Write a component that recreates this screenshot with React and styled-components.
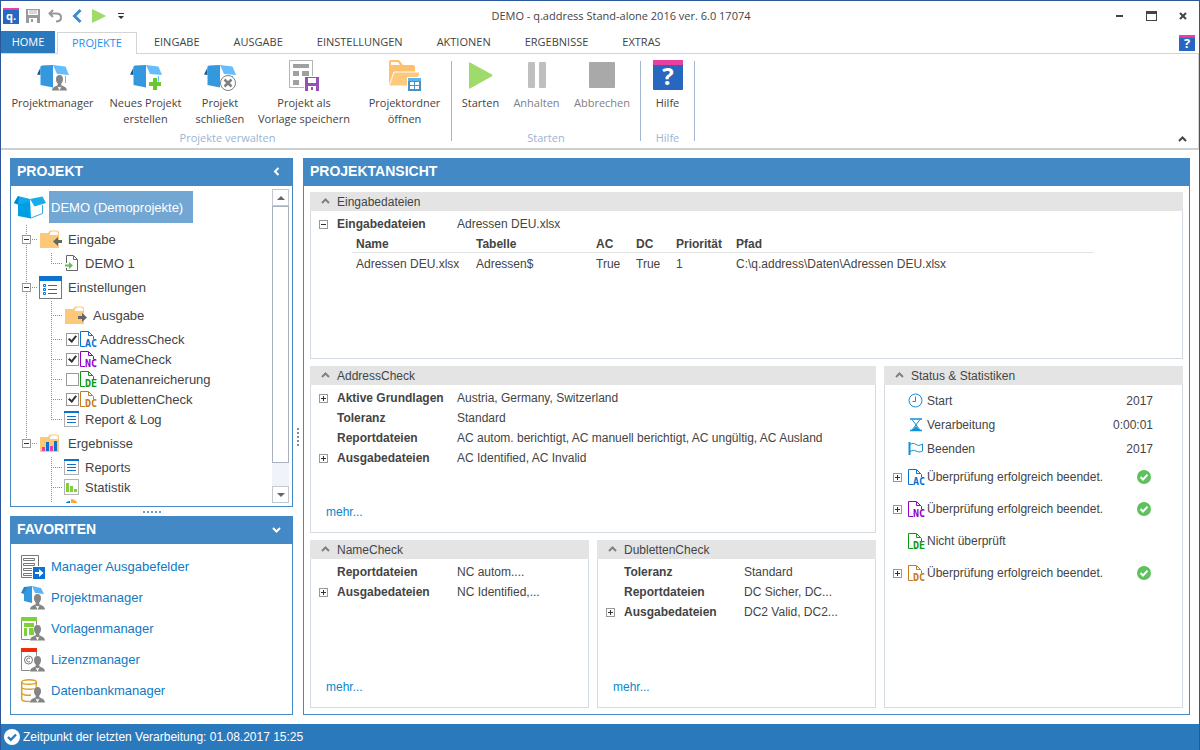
import React from "react";
import styled, { createGlobalStyle, css } from "styled-components";

const c = {
  frame: "#2b579a",
  accent: "#2a79bd",
  panel: "#4289c5",
  selected: "#72a6d3",
  text: "#444444",
  link: "#0f7ac5",
  rule: "#d5dbe2",
  bar: "#e4e4e4",
  ribbonLine: "#d4d4d4",
};

const uiFont = '"Open Sans", "Noto Sans", sans-serif';
const bodyFont = '"Liberation Sans", Arial, sans-serif';

const GlobalStyle = createGlobalStyle`
  *, *::before, *::after { box-sizing: border-box; }
  body { margin: 0; background: #fff; color: ${c.text}; font: 12px/20px ${bodyFont}; }
  button { font: inherit; color: inherit; background: none; border: 0; padding: 0; cursor: pointer; }
  svg { display: block; flex: none; overflow: visible; }
  ul { list-style: none; margin: 0; padding: 0; }
`;

/* ---------- window frame ---------- */

const Window = styled.div`
  min-height: 100vh;
  display: flex;
  flex-direction: column;
  border: 1px solid ${c.frame};
  border-bottom: 0;
`;

const TitleBar = styled.header`
  display: flex;
  align-items: center;
  height: 30px;
  padding: 0 10px 0 2px;
  font-family: ${uiFont};
`;

const QuickAccess = styled.div`
  display: flex;
  align-items: center;
  gap: 6px;
`;

const QuickButton = styled.button`
  display: flex;
  justify-content: center;
  width: 16px;
`;

const Title = styled.h1`
  flex: 1;
  margin: 0;
  font-size: 11px;
  font-weight: 400;
  text-align: center;
`;

const WindowControls = styled.div`
  display: flex;
  gap: 20px;
`;

const ControlButton = styled.button`
  display: flex;
  align-items: center;
  justify-content: center;
  width: 12px;
  height: 16px;
`;

/* ---------- ribbon ---------- */

const TabBar = styled.nav`
  display: flex;
  align-items: stretch;
  height: 23px;
  border-bottom: 1px solid ${c.ribbonLine};
  font: 11px/20px ${uiFont};
`;

const HomeTab = styled.button`
  width: 54px;
  margin-right: 2px;
  background: ${c.accent};
  color: #fff;
`;

const Tab = styled.button`
  padding: 0 17px;
  ${(p) =>
    p.$active &&
    css`
      margin: 1px 0 -1px;
      padding: 0 14px 3px;
      background: #fff;
      border: 1px solid ${c.ribbonLine};
      border-bottom: 0;
      color: #1e90f0;
    `}
`;

const TabHelp = styled.button`
  margin: 2px 4px 0 auto;
`;

const Ribbon = styled.section`
  display: flex;
  height: 96px;
  padding-left: 3px;
  border-bottom: 2px solid #cfcfcf;
  border-right: 1px solid ${c.ribbonLine};
  font: 11px/16px ${uiFont};
`;

const RibbonGroup = styled.div`
  display: flex;
  flex-direction: column;
  padding-top: 5px;
`;

const RibbonItems = styled.div`
  display: flex;
  height: 71px;
`;

const RibbonButton = styled.button`
  display: flex;
  flex-direction: column;
  align-items: center;
  gap: 4px;
  width: ${(p) => p.$width}px;
  white-space: pre-line;
  &:disabled { color: #808080; }
`;

const IconSlot = styled.span`
  display: flex;
  align-items: center;
  height: 32px;
`;

const GroupLabel = styled.span`
  text-align: center;
  color: #9db4d3;
`;

const RibbonDivider = styled.span`
  width: 1px;
  height: 80px;
  margin-top: 7px;
  background: #a3b6d2;
`;

const CollapseButton = styled.button`
  margin: auto 11px 4px auto;
`;

/* ---------- work area ---------- */

const WorkArea = styled.main`
  flex: 1;
  display: flex;
  padding: 8px 9px 9px;
`;

const Sidebar = styled.aside`
  display: flex;
  flex-direction: column;
  width: 283px;
`;

const Panel = styled.section`
  display: flex;
  flex-direction: column;
  border: 1px solid ${c.panel};
  ${(p) => p.$grow && css`flex: 1 1 0; min-height: 0; min-width: 0;`}
`;

const PanelHeader = styled.header`
  display: flex;
  align-items: center;
  justify-content: space-between;
  height: 27px;
  flex: none;
  padding: 0 11px 3px 6px;
  background: ${c.panel};
  color: #fff;
`;

const PanelTitle = styled.h2`
  margin: 0;
  font-size: 14px;
  line-height: 20px;
  font-weight: 700;
`;

const HorizontalGrip = styled.div`
  display: flex;
  justify-content: center;
  align-items: center;
  gap: 2px;
  height: 9px;
`;

const VerticalGrip = styled.div`
  display: flex;
  flex-direction: column;
  justify-content: center;
  align-items: center;
  gap: 2px;
  width: 10px;
`;

const GripDot = styled.i`
  width: 2px;
  height: 2px;
  background: ${(p) => p.$color};
`;

/* ---------- tree ---------- */

const TreeBody = styled.div`
  flex: 1 1 0;
  min-height: 200px;
  display: flex;
  padding: 3px;
`;

const TreeList = styled.ul`
  flex: 1;
  height: 0;
  min-height: 100%;
  overflow: hidden;
  font-size: 13px;
`;

const TreeRow = styled.li`
  display: flex;
  align-items: center;
  height: ${(p) => p.$height}px;
`;

const dotsDown = "repeating-linear-gradient(to bottom, #909090 0 1px, transparent 1px 2px)";
const dotsAcross = "repeating-linear-gradient(to right, #909090 0 1px, transparent 1px 2px)";

const Guide = styled.span`
  display: flex;
  align-items: center;
  align-self: stretch;
  flex: none;
  width: 25px;
  padding-left: 8px;
  background-repeat: no-repeat;
  background-position: 12px 0, 12px 50%;
  ${(p) => p.$kind === "pass" && css`background-image: ${dotsDown}; background-size: 1px 100%;`}
  ${(p) =>
    p.$kind === "branch" &&
    css`background-image: ${dotsDown}, ${dotsAcross}; background-size: 1px 100%, 12px 1px;`}
  ${(p) =>
    p.$kind === "last" &&
    css`background-image: ${dotsDown}, ${dotsAcross}; background-size: 1px 50%, 12px 1px;`}
`;

const TreeIcon = styled.span`
  display: flex;
  justify-content: flex-start;
  flex: none;
  width: ${(p) => p.$width}px;
`;

const TreeLabel = styled.button`
  padding-top: 2px;
  line-height: 18px;
  white-space: nowrap;
`;

const RootLabel = styled.button`
  width: 144px;
  height: 32px;
  padding: 2px 0 0 2px;
  margin-left: 3px;
  background: ${c.selected};
  color: #fff;
  text-align: left;
`;

const CheckLabel = styled.label`
  display: flex;
  align-items: center;
  gap: 4px;
  padding-left: 2px;
  svg { margin-left: -3px; }
  span { padding-top: 2px; line-height: 18px; }
`;

const CheckBox = styled.input`
  appearance: none;
  display: grid;
  place-items: center;
  width: 13px;
  height: 13px;
  margin: 0;
  border: 1px solid #9a9a9a;
  background: #fff;
  &:checked::after {
    content: "";
    width: 5px;
    height: 8px;
    margin-top: -2px;
    border: solid #333;
    border-width: 0 2px 2px 0;
    transform: rotate(40deg);
  }
`;

const ScrollBar = styled.div`
  display: flex;
  flex-direction: column;
  width: 17px;
  background: #f0f3f9;
`;

const ScrollButton = styled.button`
  display: flex;
  align-items: center;
  justify-content: center;
  height: 17px;
  flex: none;
  border: 1px solid #c3c8cf;
  background: #fff;
`;

const ScrollThumb = styled.div`
  flex: 11;
  border: 1px solid #a9b0bf;
  background: #fff;
`;

const ScrollTrack = styled.div`
  flex: 1;
`;

const ExpandButton = styled.button`
  display: block;
  width: 9px;
  height: 9px;
  background: #fff;
`;

/* ---------- favourites ---------- */

const FavoriteList = styled.ul`
  padding: 7px 10px 8px;
  font-size: 13px;
`;

const FavoriteLink = styled.a`
  display: flex;
  align-items: center;
  gap: 6px;
  height: 31px;
  color: ${c.link};
  text-decoration: none;
`;

/* ---------- project view ---------- */

const CardGrid = styled.div`
  flex: 1;
  display: grid;
  grid-template-columns: minmax(0, 279fr) minmax(0, 279fr) minmax(0, 299fr);
  grid-template-rows: 167fr 167fr 168fr;
  grid-template-areas:
    "input input input"
    "address address status"
    "name dup status";
  gap: 7px 8px;
  padding: 6px;
`;

const CardBox = styled.section`
  grid-area: ${(p) => p.$area};
  display: flex;
  flex-direction: column;
`;

const CardHeader = styled.h3`
  display: flex;
  align-items: center;
  gap: 7px;
  height: 19px;
  margin: 0;
  padding-left: 11px;
  background: ${c.bar};
  font-size: 12px;
  font-weight: 400;
`;

const CardBody = styled.div`
  flex: 1;
  display: flex;
  flex-direction: column;
  padding: 3px 0 10px;
  border: 1px solid ${c.rule};
  border-top: 0;
`;

const Fields = styled.dl`
  margin: 0;
`;

const Field = styled.div`
  display: grid;
  grid-template-columns: 18px 120px minmax(0, 1fr);
  align-items: center;
  padding-left: 8px;
  dt { grid-column: 2; font-weight: 700; }
  dd { margin: 0; white-space: nowrap; }
  button { grid-row: 1; }
`;

const MoreLink = styled.a`
  align-self: flex-start;
  margin: auto 0 0 15px;
  color: #0a88cc;
  text-decoration: none;
`;

const FileTable = styled.table`
  margin: 0 88px 0 41px;
  border-collapse: collapse;
  table-layout: fixed;
  text-align: left;
  th, td { padding: 0 0 0 4px; white-space: nowrap; }
  th { padding-top: 2px; line-height: 16px; border-bottom: 1px solid #e2e2e2; }
  td { height: 23px; }
`;

const Column = styled.col`
  width: ${(p) => (p.$width ? p.$width + "px" : "auto")};
`;

const StatusList = styled.ul`
  padding: 1px 29px 0 8px;
`;

const StatusRow = styled.li`
  display: grid;
  grid-template-columns: 15px 19px 1fr auto;
  align-items: center;
  height: ${(p) => (p.$check ? 32 : 24)}px;
  > span { white-space: nowrap; }
  > :nth-child(4) { margin-right: ${(p) => (p.$check ? 2 : 0)}px; }
`;

const StatusBar = styled.footer`
  display: flex;
  align-items: center;
  gap: 3px;
  height: 26px;
  padding-left: 3px;
  background: ${c.accent};
  color: #fff;
`;

/* ---------- icons ---------- */

const Chevron = ({ dir = "up", color = "#808080", size = 8, weight = 2 }) => {
  const d = {
    up: "M1 6 L4.500 2.500 L8 6",
    down: "M1 3 L4.500 6.500 L8 3",
    left: "M6.500 1 L3 4.500 L6.500 8",
  }[dir];
  return (
    <svg width={size + 1} height={size + 1} viewBox="0 0 9 9" fill="none" stroke={color} strokeWidth={weight}>
      <path d={d} />
    </svg>
  );
};

const HelpIcon = ({ size }) => (
  <svg width={size} height={size} viewBox="0 0 30 30">
    <rect width="30" height="30" rx="1" fill="#2867bf" />
    <path d="M0 5V1Q0 0 1 0H29Q30 0 30 1V5Z" fill="#e83fa0" />
    <text x="15" y="25" textAnchor="middle" fontFamily="Open Sans" fontWeight="700" fontSize="24" fill="#fff">?</text>
  </svg>
);

const LogoIcon = () => (
  <svg width="16" height="16">
    <rect width="16" height="16" fill="#2867bf" />
    <rect width="16" height="2" fill="#e83fa0" />
    <text x="8" y="12" textAnchor="middle" fontFamily="Open Sans" fontWeight="700" fontSize="11" fill="#fff">q.</text>
  </svg>
);

const SaveIcon = () => (
  <svg width="14" height="14">
    <path d="M0 0H14V14H0Z" fill="#9a9a9a" />
    <path d="M2 1H12V6H2ZM3 9H11V14H3Z" fill="#fff" />
    <path d="M3 1H11V5H3Z" fill="#d8d8d8" />
    <path d="M5 10H7V13H5Z" fill="#9a9a9a" />
  </svg>
);

const UndoIcon = () => (
  <svg width="14" height="14" fill="none" stroke="#999" strokeWidth="2">
    <path d="M5 1L1.500 4.500L5 8M2 4.500H8.500C11.500 4.500 13 6 13 8.500S11.500 12.500 8 12.500" />
  </svg>
);

const BackIcon = () => (
  <svg width="10" height="14" fill="none" stroke="#3c8bd3" strokeWidth="3">
    <path d="M8.500 1L2.500 7L8.500 13" />
  </svg>
);

const PlayIcon = ({ w, h }) => (
  <svg width={w} height={h} viewBox="0 0 24 27" preserveAspectRatio="none">
    <path d="M0 1Q0 0 1 .4L23 12.500Q24 13.500 23 14.300L1 26.500Q0 27 0 26Z" fill="#9edb6b" />
  </svg>
);

const Person = ({ x = 0, y = 0 }) => (
  <g transform={`translate(${x} ${y})`} fill="#858585" stroke="#fff" strokeWidth="1" paintOrder="stroke">
    <path d="M7.500 0C10 0 11 1.800 11 4C11 6 10.300 7.500 9.300 8.500V10C10 11.300 15 11.500 15 15.500H0C0 11.500 5 11.300 5.700 10V8.500C4.700 7.500 4 6 4 4C4 1.800 5 0 7.500 0Z" />
    <path d="M5.500 11.500L7.500 15.500L9.500 11.500L8 12.300H7Z" fill="#fff" stroke="none" />
  </g>
);

const BoxShape = () => (
  <g>
    <path d="M4.500 0.500L0 9.500L3.500 10V2Z" fill="#125b94" />
    <path d="M3.500 1.500L5 0.500L16 0V22.500L3.500 20Z" fill="#3498df" />
    <path d="M16 0L28.500 1.500L32 10L20 9Z" fill="#67bdfb" />
    <path d="M28.500 11V18" stroke="#67bdfb" fill="none" />
  </g>
);

const BoxIcon = ({ badge }) => (
  <svg width="32" height="32" viewBox="0 -6 32 32">
    <BoxShape />
    {badge === "person" && <Person x={15} y={10} />}
    {badge === "plus" && <path d="M23 13H27V17H31V21H27V25H23V21H19V17H23Z" fill="#69c92c" stroke="#fff" strokeWidth="1" paintOrder="stroke" />}
    {badge === "close" && (
      <g stroke="#808080" fill="none">
        <circle cx="24" cy="18" r="7.500" fill="#fff" />
        <path d="M20.500 14.500L27.500 21.500M27.500 14.500L20.500 21.500" strokeWidth="2.500" />
      </g>
    )}
  </svg>
);

const TemplateSaveIcon = () => (
  <svg width="30" height="31">
    <rect x="0.500" y="0.500" width="23" height="27" fill="#fff" stroke="#b5b5b5" />
    <path d="M4 4H20V8H4ZM4 11H10V16H4ZM13 11H20V16H13ZM4 20H10V25H4Z" fill="#a0a0a0" />
    <rect x="15" y="16" width="15" height="15" fill="#fff" />
    <path d="M16 17H30V31H16Z" fill="#984fb6" />
    <path d="M19 18H27V23H19ZM19 26H27V31H19Z" fill="#fff" />
    <path d="M22 27H24V30H22Z" fill="#984fb6" />
  </svg>
);

const FolderWindowIcon = () => (
  <svg width="33" height="31">
    <path d="M1 25V2Q1 0 3 0H11L15 5H25Q27 5 27 7V12H7Z" fill="#fbc16d" />
    <path d="M3 2H10L12 5H3Z" fill="#fff" />
    <path d="M6 12H32L28 26H1Z" fill="#fec97b" stroke="#fff" strokeWidth="1" />
    <rect x="19" y="17" width="14" height="14" fill="#fff" />
    <rect x="20" y="18" width="13" height="13" fill="#4a91c6" />
    <rect x="20" y="18" width="13" height="3" fill="#5bb5ee" />
    <path d="M22 22H26V25H22ZM27 22H31V25H27ZM22 26H26V29H22ZM27 26H31V29H27Z" fill="#fff" />
  </svg>
);

const PauseIcon = () => (
  <svg width="18" height="26" fill="#bfbfbf">
    <rect width="7" height="26" rx="1" />
    <rect x="11" width="7" height="26" rx="1" />
  </svg>
);

const StopIcon = () => (
  <svg width="26" height="26">
    <rect width="26" height="26" rx="1" fill="#a9a9a9" />
  </svg>
);

const ProjectBoxIcon = () => (
  <svg width="32" height="23">
    <path d="M4 5L16 3L17 22.500L4 20Z" fill="#009fe3" />
    <path d="M4 0L0 7L4 8.500L16 5.500V3Z" fill="#12a9ea" />
    <path d="M4 0L0 7L4 8.500L5 2Z" fill="#0089cf" />
    <path d="M16 3L28.500 0.500L32 7L20.500 10.500Z" fill="#1aace9" />
    <path d="M28.500 9V17.500L17 22" stroke="#2badea" fill="none" />
  </svg>
);

const TreeFolderIcon = ({ arrow, chart }) => (
  <svg width="23" height="18" viewBox="-1 0 23 18">
    <path d="M0 3H8L10 0.500H17Q19 0.500 19 3V18H0Z" fill="#fdc978" />
    <path d="M10 3L11.500 1.500H17L18 3.500V5H10Z" fill="#fff" />
    {arrow === "in" && <path d="M22 10V13H18V16L13 11.500L18 7V10Z" fill="#666" />}
    {arrow === "out" && <path d="M13 10V13H17V16L22 11.500L17 7V10Z" fill="#666" />}
    {chart && (
      <g>
        <path d="M2 13H5V17H2ZM10 12H13V17H10Z" fill="#e83fa0" />
        <path d="M6 8H9V17H6ZM14 7H17V17H14Z" fill="#0b72d0" />
      </g>
    )}
  </svg>
);

const ImportFileIcon = () => (
  <svg width="14" height="17" viewBox="-1 0 14 17" fill="none">
    <path d="M1.500 8V0.500H8.500L12.500 4.500V15.500H1.500V13" stroke="#666" />
    <path d="M8.500 1V4.500H12" stroke="#666" />
    <path d="M0 9.500H4V7L8 10.500L4 14V11.500H0Z" fill="#61c152" />
  </svg>
);

const SettingsIcon = () => (
  <svg width="23" height="23">
    <rect x="0.500" y="0.500" width="22" height="22" fill="#fff" stroke="#777" />
    <rect width="23" height="5" fill="#0b72d0" />
    <path d="M4.500 8.500H6.500V10.500H4.500ZM4.500 12.500H6.500V14.500H4.500ZM4.500 16.500H6.500V18.500H4.500ZM9 9.500H18M9 13.500H18M9 17.500H18" stroke="#0b72d0" fill="none" />
  </svg>
);

const ListIcon = () => (
  <svg width="15" height="16">
    <rect x="0.500" y="0.500" width="14" height="15" fill="#fff" stroke="#b0b0b0" />
    <path d="M3 5.500H12M3 8.500H12M3 11.500H12" stroke="#0b72d0" />
    <rect width="15" height="2" fill="#0b72d0" />
  </svg>
);

const StatsIcon = () => (
  <svg width="15" height="16">
    <rect x="0.500" y="0.500" width="14" height="15" fill="#fff" stroke="#b5b5b5" />
    <path d="M2 4H5V13H2ZM6 7H9V13H6ZM10 10H13V13H10Z" fill="#7fd13b" />
  </svg>
);

const PieIcon = () => (
  <svg width="15" height="16">
    <path d="M6 2A6 6 0 1 0 12 8H6Z" fill="#0b72d0" />
    <path d="M7 0A7 7 0 0 1 14 7H7Z" fill="#fba444" />
  </svg>
);

const ModuleIcon = ({ code, color }) => (
  <svg width="16" height="16">
    <path d="M5 15.500H0.500V0.500H8.500L13.500 5.500V8M8.500 1V4.500H12" fill="none" stroke={color} />
    <text x="5" y="16" fontFamily="DejaVu Sans Mono" fontWeight="700" fontSize="10" fill={color}>{code}</text>
  </svg>
);

const modules = {
  AC: "#0b72d0",
  NC: "#9400c8",
  DE: "#0a9a12",
  DC: "#c87a1e",
};

const Expander = ({ open, label }) => (
  <ExpandButton aria-label={label} aria-expanded={!!open}>
    <svg width="9" height="9" fill="none">
      <rect x="0.500" y="0.500" width="8" height="8" stroke="#999" />
      <path d={open ? "M2 4.500H7" : "M2 4.500H7M4.500 2V7"} stroke="#333" />
    </svg>
  </ExpandButton>
);

const ClockIcon = () => (
  <svg width="16" height="16" fill="none" stroke="#1590d6">
    <circle cx="7.500" cy="7.500" r="6.500" />
    <path d="M7.500 3.500V8.500H4.500" />
  </svg>
);

const HourglassIcon = () => (
  <svg width="16" height="14" fill="none" stroke="#1590d6">
    <path d="M2 1H14M2 12.500H14" strokeWidth="1.500" />
    <path d="M4 1.500L12 12H4L12 1.500" />
    <path d="M5 12L8 8.500L11 12Z" fill="#1590d6" />
  </svg>
);

const FlagIcon = () => (
  <svg width="16" height="14" fill="none" stroke="#1590d6">
    <path d="M1.500 0V13" strokeWidth="2" />
    <path d="M2 2.500C5 1 6 1 8 2.500S12 3.500 14.500 2V9C12 10.500 10 10 8 9S5 8 2 9.500" />
  </svg>
);

const OkIcon = ({ size = 14, fill = "#5fc15a", tick = "#fff" }) => (
  <svg width={size} height={size} viewBox="0 0 14 14">
    <circle cx="7" cy="7" r="7" fill={fill} />
    <path d="M3.500 7L6 9.500L10.500 4.800" fill="none" stroke={tick} strokeWidth="2" />
  </svg>
);

const FieldManagerIcon = () => (
  <svg width="24" height="24">
    <path d="M17.500 11V0.500H0.500V22.500H11" fill="none" stroke="#777" />
    <path d="M2.500 3.500H13.500V5.500H2.500ZM2.500 8.500H13.500V10.500H2.500ZM11 13.500H2.500V15.500H11M11 18.500H2.500V20.500H11" fill="none" stroke="#777" />
    <rect x="12" y="12" width="12" height="12" fill="#0b72d0" />
    <path d="M14 17H18V14L22.500 18L18 22V19H14Z" fill="#fff" />
  </svg>
);

const FavProjectIcon = () => (
  <svg width="24" height="24">
    <path d="M3 1L11 0V17L3 15Z" fill="#3498df" />
    <path d="M3 1L0 7L3 8L6 1Z" fill="#2b84c6" />
    <path d="M11 0L20 2L23 8L14 7Z" fill="#5cb2f2" />
    <Person x={9} y={8} />
  </svg>
);

const FavTemplateIcon = () => (
  <svg width="24" height="24">
    <path d="M0.500 3V22.500H11M15.500 3V9" fill="none" stroke="#888" />
    <rect width="16" height="4" fill="#7fd13b" />
    <path d="M3 6H13V10H3ZM3 11H6V19H3ZM8 11H13V18H8Z" fill="#7fd13b" />
    <Person x={9} y={8} />
  </svg>
);

const FavLicenseIcon = () => (
  <svg width="24" height="24">
    <path d="M0.500 3V22.500H11M15.500 3V9" fill="none" stroke="#888" />
    <rect width="16" height="4" fill="#f02c0a" />
    <circle cx="7.500" cy="12" r="4" fill="none" stroke="#777" />
    <path d="M9 10.500A2 2 0 1 0 9 13.500" fill="none" stroke="#777" />
    <Person x={9} y={8} />
  </svg>
);

const FavDatabaseIcon = () => (
  <svg width="24" height="24">
    <g fill="none" stroke="#d8a02a" strokeWidth="1.500">
      <ellipse cx="8" cy="3" rx="7.300" ry="2.300" fill="#fff" />
      <path d="M0.700 3V20C0.700 21.500 4 22.500 8 22.500H11M15.300 3V9M0.700 8C1 11 15 11 15.300 8M0.700 14C1 16 6 16.500 10 16" />
    </g>
    <Person x={9} y={8} />
  </svg>
);

/* ---------- data ---------- */

const tabs = ["PROJEKTE", "EINGABE", "AUSGABE", "EINSTELLUNGEN", "AKTIONEN", "ERGEBNISSE", "EXTRAS"];

const ribbonGroups = [
  {
    label: "Projekte verwalten",
    items: [
      { text: "Projektmanager", width: 97, icon: <BoxIcon badge="person" /> },
      { text: "Neues Projekt\nerstellen", width: 89, icon: <BoxIcon badge="plus" /> },
      { text: "Projekt\nschließen", width: 60, icon: <BoxIcon badge="close" /> },
      { text: "Projekt als\nVorlage speichern", width: 108, icon: <TemplateSaveIcon /> },
      { text: "Projektordner\nöffnen", width: 93, icon: <FolderWindowIcon /> },
    ],
  },
  {
    label: "Starten",
    items: [
      { text: "Starten", width: 57, icon: <PlayIcon w={24} h={27} /> },
      { text: "Anhalten", width: 55, icon: <PauseIcon />, disabled: true },
      { text: "Abbrechen", width: 76, icon: <StopIcon />, disabled: true },
    ],
  },
  { label: "Hilfe", items: [{ text: "Hilfe", width: 53, icon: <HelpIcon size={30} /> }] },
];

const tree = [
  { text: "Eingabe", height: 28, guides: ["branch"], open: true, icon: <TreeFolderIcon arrow="in" />, iconWidth: 29 },
  { text: "DEMO 1", height: 20, guides: ["pass", "last"], icon: <ImportFileIcon />, iconWidth: 21 },
  { text: "Einstellungen", height: 28, guides: ["branch"], open: true, icon: <SettingsIcon />, iconWidth: 29 },
  { text: "Ausgabe", height: 28, guides: ["pass", "branch"], icon: <TreeFolderIcon arrow="out" />, iconWidth: 29 },
  { text: "AddressCheck", height: 20, guides: ["pass", "branch"], module: "AC", checked: true },
  { text: "NameCheck", height: 20, guides: ["pass", "branch"], module: "NC", checked: true },
  { text: "Datenanreicherung", height: 20, guides: ["pass", "branch"], module: "DE", checked: false },
  { text: "DublettenCheck", height: 20, guides: ["pass", "branch"], module: "DC", checked: true },
  { text: "Report & Log", height: 20, guides: ["pass", "last"], icon: <ListIcon />, iconWidth: 21 },
  { text: "Ergebnisse", height: 28, guides: ["last"], open: true, icon: <TreeFolderIcon chart />, iconWidth: 29 },
  { text: "Reports", height: 20, guides: ["none", "branch"], icon: <ListIcon />, iconWidth: 21 },
  { text: "Statistik", height: 20, guides: ["none", "branch"], icon: <StatsIcon />, iconWidth: 21 },
  { text: "P", height: 20, guides: ["none", "branch"], icon: <PieIcon />, iconWidth: 21 },
];

const favorites = [
  ["Manager Ausgabefelder", <FieldManagerIcon />],
  ["Projektmanager", <FavProjectIcon />],
  ["Vorlagenmanager", <FavTemplateIcon />],
  ["Lizenzmanager", <FavLicenseIcon />],
  ["Datenbankmanager", <FavDatabaseIcon />],
];

const fileColumns = [["Name", 120], ["Tabelle", 120], ["AC", 40], ["DC", 40], ["Priorität", 60], ["Pfad", 0]];
const fileRow = ["Adressen DEU.xlsx", "Adressen$", "True", "True", "1", "C:\\q.address\\Daten\\Adressen DEU.xlsx"];

const times = [
  ["Start", "2017", <ClockIcon />],
  ["Verarbeitung", "0:00:01", <HourglassIcon />],
  ["Beenden", "2017", <FlagIcon />],
];

const checks = [
  ["AC", "Überprüfung erfolgreich beendet.", true],
  ["NC", "Überprüfung erfolgreich beendet.", true],
  ["DE", "Nicht überprüft", false],
  ["DC", "Überprüfung erfolgreich beendet.", true],
];

/* ---------- composed parts ---------- */

const Card = ({ area, title, fields = [], more, children }) => (
  <CardBox $area={area}>
    <CardHeader>
      <Chevron />
      {title}
    </CardHeader>
    <CardBody>
      {fields.length > 0 && (
        <Fields>
          {fields.map(([name, value, state]) => (
            <Field key={name}>
              {state && <Expander open={state === "open"} label={name} />}
              <dt>{name}</dt>
              <dd>{value}</dd>
            </Field>
          ))}
        </Fields>
      )}
      {children}
      {more && <MoreLink href="#more">mehr...</MoreLink>}
    </CardBody>
  </CardBox>
);

const TreeNode = ({ node }) => (
  <TreeRow $height={node.height}>
    {node.guides.map((kind, i) => (
      <Guide key={i} $kind={kind}>
        {node.open && i === node.guides.length - 1 && <Expander open label={node.text} />}
      </Guide>
    ))}
    {node.module ? (
      <CheckLabel>
        <CheckBox type="checkbox" defaultChecked={node.checked} />
        <ModuleIcon code={node.module} color={modules[node.module]} />
        <span>{node.text}</span>
      </CheckLabel>
    ) : (
      <>
        <TreeIcon $width={node.iconWidth}>{node.icon}</TreeIcon>
        <TreeLabel>{node.text}</TreeLabel>
      </>
    )}
  </TreeRow>
);

const dots = [0, 1, 2, 3, 4];

export default function App() {
  return (
    <Window>
      <GlobalStyle />
      <TitleBar>
        <QuickAccess>
          <QuickButton aria-label="q.address"><LogoIcon /></QuickButton>
          <QuickButton aria-label="Speichern"><SaveIcon /></QuickButton>
          <QuickButton aria-label="Rückgängig"><UndoIcon /></QuickButton>
          <QuickButton aria-label="Zurück"><BackIcon /></QuickButton>
          <QuickButton aria-label="Starten"><PlayIcon w={14} h={14} /></QuickButton>
          <QuickButton aria-label="Anpassen">
            <svg width="6" height="6"><path d="M0 0H6V1H0ZM0 3H6L3 6Z" fill="#333" /></svg>
          </QuickButton>
        </QuickAccess>
        <Title>DEMO - q.address Stand-alone 2016 ver. 6.0 17074</Title>
        <WindowControls>
          <ControlButton aria-label="Minimieren">
            <svg width="7" height="2"><rect width="7" height="2" fill="#444" /></svg>
          </ControlButton>
          <ControlButton aria-label="Maximieren">
            <svg width="11" height="10"><path d="M0 0H11V10H0ZM1 3V9H10V3Z" fill="#444" fillRule="evenodd" /></svg>
          </ControlButton>
          <ControlButton aria-label="Schließen">
            <svg width="8" height="8"><path d="M1 1L7 7M7 1L1 7" stroke="#444" strokeWidth="2" /></svg>
          </ControlButton>
        </WindowControls>
      </TitleBar>

      <TabBar>
        <HomeTab>HOME</HomeTab>
        {tabs.map((t, i) => <Tab key={t} $active={i === 0}>{t}</Tab>)}
        <TabHelp aria-label="Hilfe"><HelpIcon size={16} /></TabHelp>
      </TabBar>

      <Ribbon>
        {ribbonGroups.map((g) => (
          <React.Fragment key={g.label}>
            <RibbonGroup>
              <RibbonItems>
                {g.items.map((it) => (
                  <RibbonButton key={it.text} $width={it.width} disabled={it.disabled}>
                    <IconSlot>{it.icon}</IconSlot>
                    <span>{it.text}</span>
                  </RibbonButton>
                ))}
              </RibbonItems>
              <GroupLabel>{g.label}</GroupLabel>
            </RibbonGroup>
            <RibbonDivider />
          </React.Fragment>
        ))}
        <CollapseButton aria-label="Menüband minimieren"><Chevron color="#444" /></CollapseButton>
      </Ribbon>

      <WorkArea>
        <Sidebar>
          <Panel $grow>
            <PanelHeader>
              <PanelTitle>PROJEKT</PanelTitle>
              <Chevron dir="left" color="#fff" />
            </PanelHeader>
            <TreeBody>
              <TreeList>
                <TreeRow $height={36}>
                  <ProjectBoxIcon />
                  <RootLabel>DEMO (Demoprojekte)</RootLabel>
                </TreeRow>
                {tree.map((n) => <TreeNode key={n.text} node={n} />)}
              </TreeList>
              <ScrollBar>
                <ScrollButton aria-label="Nach oben">
                  <svg width="8" height="4"><path d="M0 4L4 0L8 4Z" fill="#666" /></svg>
                </ScrollButton>
                <ScrollThumb />
                <ScrollTrack />
                <ScrollButton aria-label="Nach unten">
                  <svg width="8" height="4"><path d="M0 0L4 4L8 0Z" fill="#666" /></svg>
                </ScrollButton>
              </ScrollBar>
            </TreeBody>
          </Panel>
          <HorizontalGrip>{dots.map((d) => <GripDot key={d} $color="#6f9fd2" />)}</HorizontalGrip>
          <Panel>
            <PanelHeader>
              <PanelTitle>FAVORITEN</PanelTitle>
              <Chevron dir="down" color="#fff" />
            </PanelHeader>
            <FavoriteList>
              {favorites.map(([text, icon]) => (
                <li key={text}>
                  <FavoriteLink href="#favorit">{icon}{text}</FavoriteLink>
                </li>
              ))}
            </FavoriteList>
          </Panel>
        </Sidebar>

        <VerticalGrip>{dots.map((d) => <GripDot key={d} $color="#8a8a96" />)}</VerticalGrip>

        <Panel $grow>
          <PanelHeader>
            <PanelTitle>PROJEKTANSICHT</PanelTitle>
          </PanelHeader>
          <CardGrid>
            <Card area="input" title="Eingabedateien" fields={[["Eingabedateien", "Adressen DEU.xlsx", "open"]]}>
              <FileTable>
                <colgroup>{fileColumns.map(([n, w]) => <Column key={n} $width={w} />)}</colgroup>
                <thead>
                  <tr>{fileColumns.map(([n]) => <th key={n} scope="col">{n}</th>)}</tr>
                </thead>
                <tbody>
                  <tr>{fileRow.map((v, i) => <td key={i}>{v}</td>)}</tr>
                </tbody>
              </FileTable>
            </Card>
            <Card
              area="address"
              title="AddressCheck"
              more
              fields={[
                ["Aktive Grundlagen", "Austria, Germany, Switzerland", "closed"],
                ["Toleranz", "Standard"],
                ["Reportdateien", "AC autom. berichtigt, AC manuell berichtigt, AC ungültig, AC Ausland"],
                ["Ausgabedateien", "AC Identified, AC Invalid", "closed"],
              ]}
            />
            <Card
              area="name"
              title="NameCheck"
              more
              fields={[
                ["Reportdateien", "NC autom...."],
                ["Ausgabedateien", "NC Identified,...", "closed"],
              ]}
            />
            <Card
              area="dup"
              title="DublettenCheck"
              more
              fields={[
                ["Toleranz", "Standard"],
                ["Reportdateien", "DC Sicher, DC..."],
                ["Ausgabedateien", "DC2 Valid, DC2...", "closed"],
              ]}
            />
            <Card area="status" title="Status & Statistiken">
              <StatusList>
                {times.map(([name, value, icon]) => (
                  <StatusRow key={name}>
                    <span />
                    {icon}
                    <span>{name}</span>
                    <span>{value}</span>
                  </StatusRow>
                ))}
                {checks.map(([code, text, ok]) => (
                  <StatusRow key={code} $check>
                    {ok ? <Expander label={code} /> : <span />}
                    <ModuleIcon code={code} color={modules[code]} />
                    <span>{text}</span>
                    {ok && <OkIcon />}
                  </StatusRow>
                ))}
              </StatusList>
            </Card>
          </CardGrid>
        </Panel>
      </WorkArea>

      <StatusBar>
        <OkIcon size={16} fill="#fff" tick={c.accent} />
        Zeitpunkt der letzten Verarbeitung: 01.08.2017 15:25
      </StatusBar>
    </Window>
  );
}
